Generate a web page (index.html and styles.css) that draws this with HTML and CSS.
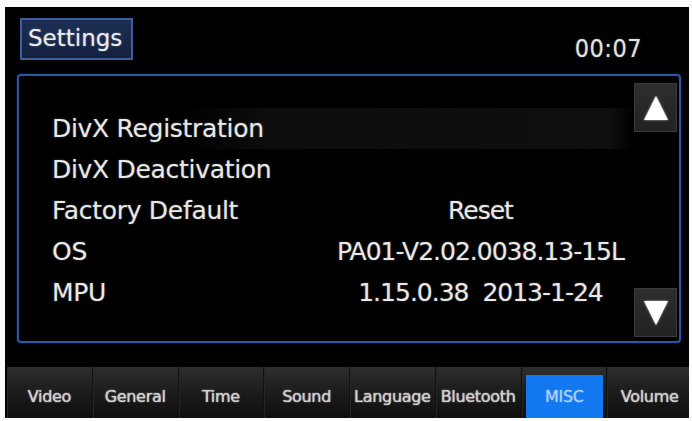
FILE: index.html
```html
<!DOCTYPE html>
<html>
<head>
<meta charset="utf-8">
<link rel="stylesheet" href="styles.css">
</head>
<body>
<div class="screen">
  <div class="header">
    <div class="title-btn">Settings</div>
    <div class="clock">00:07</div>
  </div>
  <div class="panel">
    <div class="list">
      <div class="row row-active"><span class="label">DivX Registration</span><span class="value"></span></div>
      <div class="row"><span class="label">DivX Deactivation</span><span class="value"></span></div>
      <div class="row"><span class="label">Factory Default</span><span class="value">Reset</span></div>
      <div class="row"><span class="label">OS</span><span class="value">PA01-V2.02.0038.13-15L</span></div>
      <div class="row"><span class="label">MPU</span><span class="value">1.15.0.38&nbsp;&nbsp;2013-1-24</span></div>
    </div>
    <div class="scroll">
      <div class="scroll-btn"><svg width="26" height="26" viewBox="0 0 26 26"><polygon points="13,1 25,25 1,25" fill="#fff"/></svg></div>
      <div class="scroll-btn"><svg width="26" height="26" viewBox="0 0 26 26"><polygon points="1,1 25,1 13,25" fill="#fff"/></svg></div>
    </div>
  </div>
  <div class="gap"></div>
  <div class="tabs">
    <div class="tab">Video</div>
    <div class="tab">General</div>
    <div class="tab">Time</div>
    <div class="tab">Sound</div>
    <div class="tab">Language</div>
    <div class="tab">Bluetooth</div>
    <div class="tab tab-active"><span>MISC</span></div>
    <div class="tab">Volume</div>
  </div>
</div>
</body>
</html>
```

FILE: styles.css
```css
html, body {
  margin: 0;
  padding: 0;
  background: #fbfbfb;
}
body {
  width: 692px;
  height: 421px;
  overflow: hidden;
  font-family: "DejaVu Sans", "Liberation Sans", sans-serif;
}
.screen {
  margin: 7px 3px 3px 5px;
  width: 684px;
  height: 411px;
  background: #000;
  overflow: hidden;
  display: flex;
  flex-direction: column;
}
.header {
  height: 67px;
  flex: none;
  display: flex;
  justify-content: space-between;
  align-items: flex-start;
  padding: 11px 47px 0 15px;
  box-sizing: border-box;
}
.title-btn {
  width: 113px;
  height: 42px;
  box-sizing: border-box;
  border: 2px solid #3f5f9c;
  background: linear-gradient(to bottom, #1c2e55, #13213f);
  color: #ececec;
  font-size: 23px;
  line-height: 36px;
  padding-left: 6px;
  text-shadow: 0 0 2px rgba(255,255,255,0.4);
}
.clock {
  color: #e2e2e2;
  font-family: "DejaVu Sans Condensed", "DejaVu Sans", sans-serif;
  font-size: 25px;
  line-height: 30px;
  margin-top: 16px;
  letter-spacing: 0.5px;
  text-shadow: 0 0 2px rgba(255,255,255,0.35);
}
.panel {
  height: 269px;
  flex: none;
  margin: 0 8px 0 12px;
  box-sizing: border-box;
  border: 2px solid #2e56a6;
  border-radius: 4px;
  box-shadow: 0 0 2px rgba(60,100,200,0.6);
  display: flex;
}
.list {
  flex: 1;
  padding-top: 32px;
}
.row {
  display: grid;
  grid-template-columns: 275px 1fr;
  padding-left: 33px;
  height: 41px;
  line-height: 41px;
  font-size: 25px;
  color: #e8e8e8;
  letter-spacing: -0.3px;
  text-shadow: 0 0 2px rgba(255,255,255,0.35);
  white-space: nowrap;
}
.row-active {
  background: linear-gradient(to right, rgba(0,0,0,0) 0%, rgba(0,0,0,0) 27%, #0d0d0d 40%, #0f0f0f 96%, rgba(0,0,0,0) 100%);
}
.value {
  text-align: center;
  letter-spacing: -1px;
}
.scroll {
  flex: none;
  width: 43px;
  display: flex;
  flex-direction: column;
  justify-content: space-between;
  padding: 7px 2px 4px 0;
}
.scroll-btn {
  width: 43px;
  height: 49px;
  box-sizing: border-box;
  border: 1px solid #3a3a3a;
  background: linear-gradient(to bottom, #2e2e2e, #222);
  display: flex;
  align-items: center;
  justify-content: center;
}
.scroll-btn svg {
  filter: drop-shadow(0 0 1px rgba(255,255,255,0.7));
}
.gap {
  height: 24px;
  flex: none;
}
.tabs {
  height: 51px;
  flex: none;
  width: 686px;
  margin-left: 2px;
  display: grid;
  grid-template-columns: repeat(8, 1fr);
  background: linear-gradient(to bottom, #2f2f2f 0%, #222 30%, #161616 70%, #0e0e0e 100%);
}
.tab {
  display: flex;
  align-items: flex-end;
  justify-content: center;
  padding-bottom: 12px;
  box-sizing: border-box;
  border-right: 1px solid #111;
  box-shadow: inset 1px 0 0 #262626;
  font-size: 16px;
  color: #cfcfcf;
  letter-spacing: -0.3px;
  text-shadow: 0 0 1px #cfcfcf, 0 0 2px rgba(255,255,255,0.3);
  white-space: nowrap;
}
.tab-active {
  padding: 8px 3px 0 4px;
  align-items: stretch;
}
.tab-active span {
  flex: 1;
  display: flex;
  align-items: flex-end;
  justify-content: center;
  padding-bottom: 12px;
  background: #1278f0;
  color: #b8d6ff;
  text-shadow: 0 0 2px rgba(200,230,255,0.5);
}
```
